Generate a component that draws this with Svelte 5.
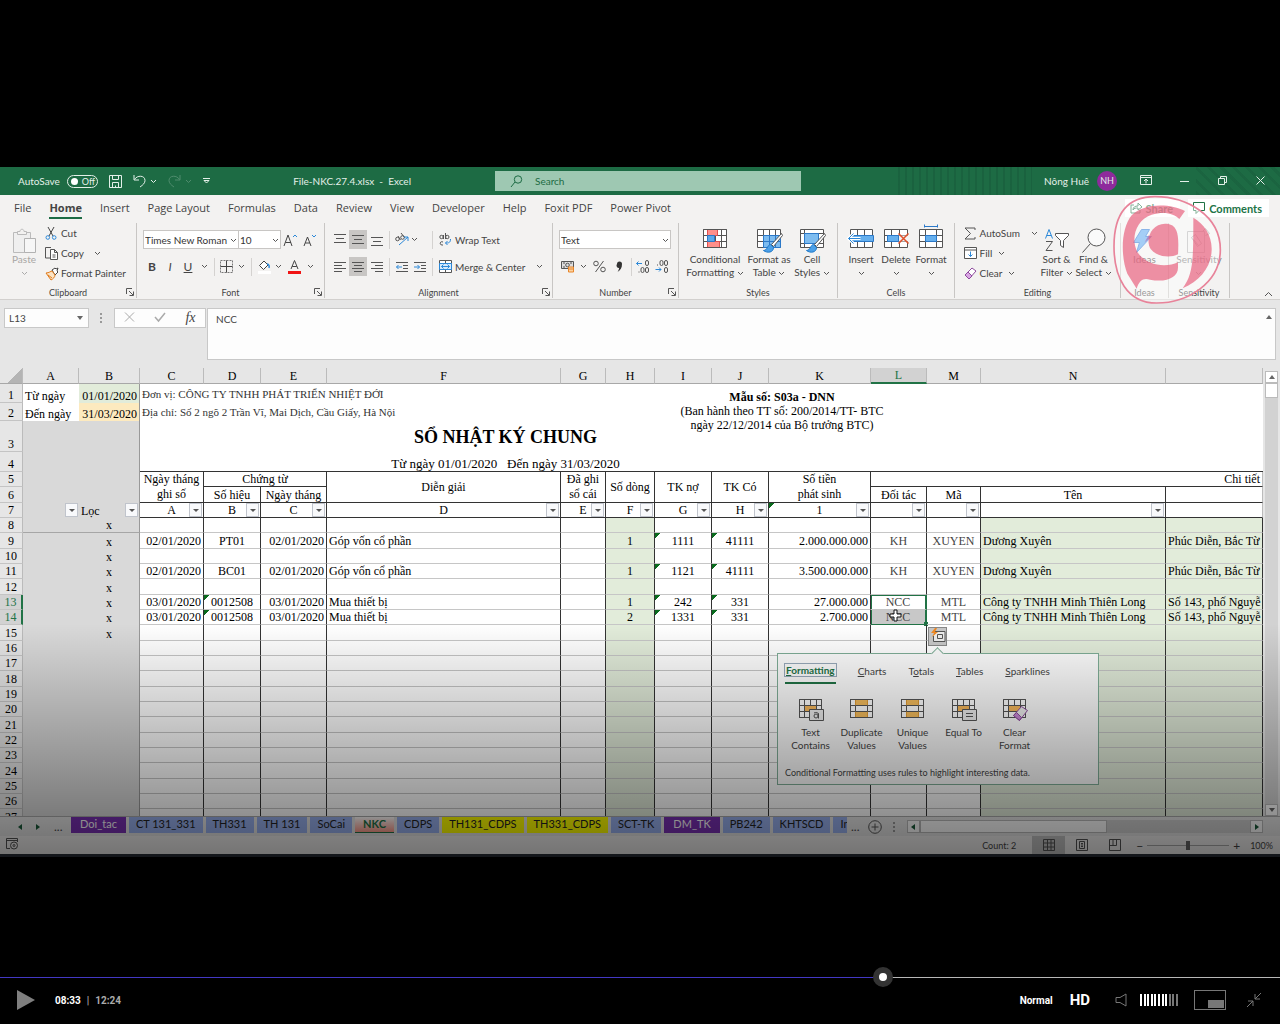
<script>
  const menu = [
    "File", "Home", "Insert", "Page Layout", "Formulas", "Data", "Review",
    "View", "Developer", "Help", "Foxit PDF", "Power Pivot",
  ];

  const sheets = [
    { name: "Doi_tac", color: "purple" },
    { name: "CT 131_331", color: "blue" },
    { name: "TH331", color: "blue" },
    { name: "TH 131", color: "blue" },
    { name: "SoCai", color: "blue" },
    { name: "NKC", color: "active" },
    { name: "CDPS", color: "blue" },
    { name: "TH131_CDPS", color: "yellow" },
    { name: "TH331_CDPS", color: "yellow" },
    { name: "SCT-TK", color: "blue" },
    { name: "DM_TK", color: "purple" },
    { name: "PB242", color: "blue" },
    { name: "KHTSCD", color: "blue" },
    { name: "In", color: "blue" },
  ];

  const columns = "ABCDEFGHIJKLMNO".split("");
  const bodyColumns = columns.slice(2);

  const entries = {
    9: { C: "02/01/2020", D: "PT01", E: "02/01/2020", F: "Góp vốn cổ phần", H: "1", I: "1111", J: "41111", K: "2.000.000.000", L: "KH", M: "XUYEN", N: "Dương Xuyên", O: "Phúc Diễn, Bắc Từ" },
    11: { C: "02/01/2020", D: "BC01", E: "02/01/2020", F: "Góp vốn cổ phần", H: "1", I: "1121", J: "41111", K: "3.500.000.000", L: "KH", M: "XUYEN", N: "Dương Xuyên", O: "Phúc Diễn, Bắc Từ" },
    13: { C: "03/01/2020", D: "0012508", E: "03/01/2020", F: "Mua thiết bị", H: "1", I: "242", J: "331", K: "27.000.000", L: "NCC", M: "MTL", N: "Công ty TNHH Minh Thiên Long", O: "Số 143, phố Nguyễ" },
    14: { C: "03/01/2020", D: "0012508", E: "03/01/2020", F: "Mua thiết bị", H: "2", I: "1331", J: "331", K: "2.700.000", L: "NCC", M: "MTL", N: "Công ty TNHH Minh Thiên Long", O: "Số 143, phố Nguyễ" },
  };

  const rows = Array.from({ length: 20 }, (_, i) => i + 8);

  const filterRow = { C: "A", D: "B", E: "C", F: "D", G: "E", H: "F", I: "G", J: "H", K: "1", L: "", M: "", N: "" };

  const analysisTabs = [
    ["", "F", "ormatting"],
    ["", "C", "harts"],
    ["T", "o", "tals"],
    ["", "T", "ables"],
    ["", "S", "parklines"],
  ];

  const analysisItems = [
    { icon: "textContains", lines: ["Text", "Contains"] },
    { icon: "duplicate", lines: ["Duplicate", "Values"] },
    { icon: "duplicate", lines: ["Unique", "Values"] },
    { icon: "equalTo", lines: ["Equal To"] },
    { icon: "clearFormat", lines: ["Clear", "Format"] },
  ];

  let formula = $state("NCC");
  let cellRef = $state("L13");
  let zoom = $state(100);
  let time = $state(513);
  const total = 744;
  let played = $derived(time / total);

  // triangle marker for numbers stored as text
  function flagged(row, col) {
    if (!entries[row]) return false;
    return col === "I" || col === "J" || (col === "D" && row > 12);
  }

  const table = '<path d="M1 1h23v18H1zM1 7h23M1 13h23M7 1v18M13 1v18M19 1v18" fill="#fff" stroke="#555"/>';
  const orangeTable = '<path d="M1 1h22v18H1z" fill="#fff"/><path d="M6 1h12v6H6z" fill="#fff"/>';
  const brush = '<path d="M25 5 15 16l2 2 9-11z" fill="#fff" stroke="#555"/><path d="M14 16c-3 0-3 6-7 6 4 3 10 2 10-3z" fill="#4ba0e8" stroke="#1f78c8"/>';

  const icons = {
    save: '<path d="M.5.5h12v12H.5zM3.500.5v4h6v-4M3.500 12.500v-5h6v5M6.500 12.500v-2"/>',
    undo: '<path d="M1 1v5h5M1.500 5.500C4 1 12 1 12 6.500 12 9 10 11 7 13"/>',
    redo: '<path d="M12 1v5H7M11.500 5.500C9 1 1 1 1 6.500 1 9 3 11 6 13"/>',
    search: '<circle cx="8" cy="4.500" r="3.700"/><path d="M5 7 1 12"/>',
    ribbonOpts: '<path d="M.5.5h11v9H.5zM.5 2.500h11M6 8.500V4.500M4 6l2-2 2 2"/>',
    minimize: '<path d="M0 5.500h9"/>',
    restore: '<path d="M.5 2.500h6v6h-6zM2.500 2.500v-2h6v6h-2"/>',
    close: '<path d="m.5.5 8 8m0-8-8 8"/>',
    paste: '<path d="M1 4h17v20H1z" fill="#efefef" stroke="#bbb"/><path d="M5 6V3h2.500c0-3 4-3 4 0H14v3z" fill="#f3f2f1" stroke="#bbb"/><path d="M12 10h11v14H12z" fill="#f6f6f6" stroke="#b2b2b2"/>',
    cut: '<path d="m3 0 5 9M9 0 4 9" stroke="#444"/><circle cx="2.800" cy="10.500" r="1.800" stroke="#2b88d8"/><circle cx="9.200" cy="10.500" r="1.800" stroke="#2b88d8"/>',
    copy: '<path d="M5 11H.5V.5H6" stroke="#555"/><path d="M5.500 2.500h4l3 3v7h-7zM9.500 2.500v3h3M7.500 8h3M7.500 10h3" fill="#fff" stroke="#555"/>',
    painter: '<path d="m7 3 3-2 1 1 2-1-1 3 1 1-3 3z" fill="#fff" stroke="#444"/><path d="M1 6c3 0 5-2 6-2l3 4c0 2-2 4-4 5z" fill="#fbe3c4" stroke="#e07a1a"/><path d="m3 8 4 3" stroke="#e07a1a"/>',
    growFont: '<path d="m1 13 4-11 4 11M2.500 9.500h5.500" stroke="#444"/><path d="m10 4 2-2 2 2" stroke="#2b88d8"/>',
    shrinkFont: '<path d="m1 13 3.500-9L8 13M2.300 10h4.500" stroke="#444"/><path d="m9 2 2 2 2-2" stroke="#2b88d8"/>',
    borders: '<path d="M.5.5h12v12H.5z" stroke="#777" stroke-dasharray="2 1"/><path d="M6.500.5v12M.5 6.500h12" stroke="#444"/>',
    fillColor: '<path d="M6 1 1.500 5.500 5.500 9.500 10 5z" fill="#fff" stroke="#444"/><path d="M9 4c2 0 2.500 2 2 4" stroke="#2b88d8" stroke-width="1.500"/><path d="M0 11h13v3H0z" fill="#fff" stroke="none"/>',
    fontColor: '<path d="m3 9 3.500-8.500L10 9M4.200 6.500h4.600" stroke="#444"/><path d="M0 11h13v3H0z" fill="#f01414" stroke="none"/>',
    alignTop: '<path d="M0 1.500h12M2 5.500h8M0 9.500h12"/>',
    alignMid: '<path d="M0 1.500h12M2 5.500h8M0 9.500h12"/>',
    alignBot: '<path d="M0 3.500h12M2 7.500h8M0 11.500h12"/>',
    left: '<path d="M0 1.500h12M0 4.500h8M0 7.500h12M0 10.500h8"/>',
    center: '<path d="M0 1.500h12M2 4.500h8M0 7.500h12M2 10.500h8"/>',
    right: '<path d="M0 1.500h12M4 4.500h8M0 7.500h12M4 10.500h8"/>',
    orient: '<circle cx="2.500" cy="6" r="1.800"/><path d="m3 3 2.500 4M6 0l4 5"/><circle cx="7.500" cy="4.500" r="1.800"/><path d="m4 12 9-8m-4 0h4v4" stroke="#2b88d8"/>',
    outdent: '<path d="M0 1.500h12M7 4.500h5M7 7.500h5M0 10.500h12"/><path d="M6 6H.5m2-2-2 2 2 2" stroke="#2b88d8"/>',
    indent: '<path d="M0 1.500h12M7 4.500h5M7 7.500h5M0 10.500h12"/><path d="M0 6h5.500m-2-2 2 2-2 2" stroke="#2b88d8"/>',
    wrap: '<circle cx="2.500" cy="4" r="1.700"/><path d="M4.500 2v4M6.500 0v6M4 9c-3-1.500-4 3-1 3h1"/><circle cx="8.300" cy="4" r="1.700"/><path d="M11.500 6c0 4-2 4-5 4m2-2-2 2 2 2" stroke="#2b88d8"/>',
    merge: '<path d="M.5.5h12v12H.5zM6.500.5v3M6.500 9.500v3" fill="#fff" stroke="#555"/><path d="M.5 3.500h12v6H.5z" fill="#d5e9fb" stroke="#2b88d8"/><path d="M2.500 6.500h8m-6-2-2 2 2 2m4-4 2 2-2 2" stroke="#2b88d8"/>',
    currency: '<path d="M.5 1.500h12v7H.5z" fill="#ddd"/><path d="M2 3h2M9 3h2M2 7h2"/><circle cx="6.500" cy="5" r="1.800"/><path d="M7.500 7h5v5h-5z" fill="#fbd1a0" stroke="#e8862a"/><path d="M7.500 9h5" stroke="#e8862a"/>',
    percent: '<circle cx="3" cy="3.500" r="2.300"/><circle cx="10" cy="9.500" r="2.300"/><path d="M10.500 1 2.500 12"/>',
    comma: '<path d="M2 3a2.500 2.500 0 0 1 5 0c0 4-1.500 6-4.500 8 1-1.500 1.600-3 1.600-4A2.500 2.500 0 0 1 2 3z" fill="#333" stroke="none"/>',
    decInc: '<path d="M6 3.500H.5m2-2-2 2 2 2" stroke="#2b88d8"/><rect x="9.500" y=".5" width="3" height="5" rx="1.500"/><rect x="5" y="7.500" width="3" height="5" rx="1.500"/><rect x="9.500" y="7.500" width="3" height="5" rx="1.500"/><path d="M2.500 12h1"/>',
    decDec: '<path d="M.5 9.500H6m-2-2 2 2-2 2" stroke="#2b88d8"/><rect x="5" y=".5" width="3" height="5" rx="1.500"/><rect x="9.500" y=".5" width="3" height="5" rx="1.500"/><rect x="9.500" y="7.500" width="3" height="5" rx="1.500"/><path d="M2 5h1"/>',
    conditional: table + '<path d="M5 1h10v6H5zM5 13h12v6H5z" fill="#ff8f8a" stroke="#e05050"/><path d="M5 7h7v6H5z" fill="#5aa9ea" stroke="#2b78c8"/><path d="M1 1h23v18H1z"/>',
    formatTable: table + '<path d="M7 7h17v12H7z" fill="#7dbcf0" stroke="#2b78c8"/><path d="M7 13h17M13 7v12M19 7v12" stroke="#2b78c8"/>' + brush,
    cellStyles: '<path d="M1 1h23v18H1zM5 1v18M1 5h23M1 15h23" fill="#fff"/><path d="M5 5h14v10H5z" fill="#7dbcf0" stroke="#2b78c8"/>' + brush,
    insertCells: '<path d="M2 1h22v18H2zM9 1v18M16 1v18M2 7h22M2 13h22" fill="#fff"/><path d="M4 7h21v6H4z" fill="#66b0ee" stroke="#2b78c8"/><path d="M12 10H0m5-5-5 5 5 5" stroke="#fff" stroke-width="3"/><path d="M12 10H0m5-5-5 5 5 5" stroke="#2b88d8"/>',
    deleteCells: '<path d="M1 1h23v18H1zM8 1v18M16 1v18M1 7h23M1 13h23" fill="#fff"/><path d="M15 7h10v6H15z" fill="#f3f2f1" stroke="none"/><path d="M4 7h11v6H4z" fill="#66b0ee" stroke="#2b78c8"/><path d="m15 5 10 10m0-10L15 15" stroke="#e0502a" stroke-width="1.500"/>',
    formatCells: '<path d="M1 1h23v18H1zM7 1v18M18 1v18M1 7h23M1 13h23" fill="#fff"/><path d="M7 7h11v6H7z" fill="#66b0ee" stroke="#2b78c8"/><path d="M6-2h13M6-4v3M19-4v3" stroke="#2b78c8"/>',
    sum: '<path d="M11 3V1H1l5.500 5.500L1 12h10v-2"/>',
    fillDown: '<path d="M.5.500h12v11H.5zM.5 3h12" fill="#fff"/><path d="M6.500 4.500v5m-2-2 2 2 2-2" stroke="#2b88d8"/>',
    eraser: '<path d="m1 8 7-7 4 3-7 8z" fill="#fff" stroke="#8e4a9e"/><path d="m1 8 3-3 4 4-3 3z" fill="#d9a6e4" stroke="#8e4a9e"/>',
    sort: '<path d="m1 10 3.500-9L8 10M2.300 7h4.400" stroke="#2b88d8"/><path d="M1.500 13H8l-6.500 9H8"/><path d="M11 5h13v2l-5 5v7l-3-2v-5l-5-5z" fill="#fff"/>',
    find: '<circle cx="15" cy="9" r="8.500" fill="#fafafa"/><path d="m9 15-8 9"/>',
    ideas: '<path d="M9 1h8l-4 7h6L4 24l3-10H1z" fill="#5aa6ee" stroke="#2b78d8"/><path d="m12 14 7-6-3-1z" fill="#6a2a9a" stroke="none"/>',
    sensitivity: '<path d="M1 3h17v21H1z" fill="none" stroke="#999"/><path d="m5 9 4-3 6 9-4 3zM16 3l3-3 4 5-4 2M7 11l5 6" stroke="#888"/>',
    share: '<path d="M4 3H1v8h9V8M3 8c0-3 2-4 5-4V1l4 4-4 3V6C6 6 4 6 3 8z" stroke="#217346"/>',
    comment: '<path d="M.5.5h11v8H6l-3 3v-3H.5z" stroke="#217346" fill="#fff"/>',
    launcher: '<path d="M.5 6V.5H6M3 3l4 4M7.500 3.500v4h-4"/>',
    textContains: orangeTable + '<path d="M6 7h12v6H6z" fill="#f8b85a"/><path d="M1 1h22v18H1zM1 7h22M1 13h22M6 1v18M18 1v18M12 1v6"/><path d="M11 11h14v11H11z" fill="#eee"/><circle cx="17.500" cy="17.500" r="2"/><path d="M20 15v5M15.500 14.500c2-1 4-.500 4.500 1"/>',
    duplicate: orangeTable + '<path d="M1 1h22v18H1zM1 7h22M1 13h22"/><path d="M6 1h12v6H6zM6 13h12v6H6z" fill="#f6bd5c" stroke="#e09a30"/><path d="M6 7h12v6H6z" fill="#fff"/><path d="M1 1h22v18H1z"/>',
    equalTo: orangeTable + '<path d="M6 7h12v6H6z" fill="#f8b85a"/><path d="M1 1h22v18H1zM1 7h22M1 13h22M6 1v18M18 1v18M12 1v6"/><path d="M11 11h14v11H11z" fill="#eee"/><path d="M14.500 15h7M14.500 18h7"/>',
    clearFormat: orangeTable + '<path d="M6 7h12v6H6z" fill="#f8b85a"/><path d="M1 1h22v18H1zM1 7h22M1 13h22M6 1v18M18 1v18M12 1v6"/><path d="m11 17 8-9 6 4-8 10z" fill="#eee" stroke="#8e4a9e"/><path d="m11 17 3-3 5 5-2 3z" fill="#c98ad6" stroke="#8e4a9e"/>',
    quick: '<path d="M5 3.500h10v10H3.500V8" fill="#eee"/><path d="M7.500 6.500h5v4h-5z"/><path d="M5 0 1 5h3l-2 4 6-5H5l2-4z" fill="#f08a24" stroke="none"/>',
    normalView: '<path d="M.5.5h11v11H.5zM4.500.5v11M8 .5v11M.5 4h11M.5 8h11"/>',
    pageView: '<path d="M.5.5h11v11H.5zM3.500 2.500h5v7h-5zM5 4.500h2M5 6h2M5 7.500h2"/>',
    breakView: '<path d="M.5.5h11v11H.5zM.5 6.500h7v-6M4 .5v6"/>',
    macro: '<path d="M4 10.500H.5V.5h11V4M.5 2.500h11"/><circle cx="8" cy="7.500" r="3.500"/><circle cx="8" cy="7.500" r="1"/>',
  };
</script>

<!-- the large icons are drawn on whole coordinates, so shift them onto the pixel grid -->
{#snippet icon(name, w, h)}
  {@const shift = w > 20 ? -0.5 : 0}
  <svg class="icon" width={w} height={h} viewBox="{shift} {shift} {w} {h}" aria-hidden="true">{@html icons[name]}</svg>
{/snippet}

{#snippet chev()}
  <svg class="icon chev" width="7" height="5" viewBox="0 0 7 5" aria-hidden="true"><path d="m1 1 2.500 2.500L6 1" /></svg>
{/snippet}

{#snippet big(name, lines, drop)}
  <button class="big">
    {@render icon(name, 26, 25)}
    {#each lines as line, i}
      <span>{line}{#if drop && i === 1}&nbsp;{@render chev()}{/if}</span>
    {/each}
    {#if drop && lines.length === 1}<span>{@render chev()}</span>{/if}
  </button>
{/snippet}

{#snippet filter()}
  <button class="filter" aria-label="Filter"></button>
{/snippet}

<main>
  <div class="excel">
    <header class="titlebar">
      <div class="quick-access">
        <span>AutoSave</span>
        <button class="toggle"><i></i>Off</button>
        <button class="save" aria-label="Save">{@render icon("save", 13, 13)}</button>
        <button aria-label="Undo">{@render icon("undo", 14, 14)}{@render chev()}</button>
        <button class="dim" aria-label="Redo">{@render icon("redo", 14, 14)}{@render chev()}</button>
        <button aria-label="Customize"><svg class="icon" width="7" height="6" viewBox="0 0 7 6"><path d="M0 .5h7M1 2.500l2.500 2.500L6 2.500z" /></svg></button>
        <span class="doc">File-NKC.27.4.xlsx&nbsp; -&nbsp; Excel</span>
      </div>
      <label class="search">
        {@render icon("search", 13, 13)}
        <input type="text" placeholder="Search" />
      </label>
      <div class="window-tools">
        <span>Nông Huê</span>
        <span class="avatar">NH</span>
        <button aria-label="Ribbon options">{@render icon("ribbonOpts", 12, 10)}</button>
        <button aria-label="Minimize">{@render icon("minimize", 9, 9)}</button>
        <button aria-label="Restore">{@render icon("restore", 9, 9)}</button>
        <button aria-label="Close">{@render icon("close", 9, 9)}</button>
      </div>
    </header>

    <nav class="menu">
      {#each menu as item}
        <button class:current={item === "Home"}>{item}</button>
      {/each}
      <div class="menu-end">
        <button class="boxed">{@render icon("share", 12, 12)}Share</button>
        <button class="boxed">{@render icon("comment", 12, 12)}Comments</button>
      </div>
    </nav>

    <div class="ribbon">
      <section class="group clipboard">
        <div class="tools">
          <button class="big off">{@render icon("paste", 24, 25)}<span>Paste</span><span>{@render chev()}</span></button>
          <div class="stack">
            <button>{@render icon("cut", 13, 13)}Cut</button>
            <button>{@render icon("copy", 13, 13)}Copy&nbsp;&nbsp;&nbsp;{@render chev()}</button>
            <button>{@render icon("painter", 13, 13)}Format Painter</button>
          </div>
        </div>
        <footer>Clipboard<button aria-label="Clipboard options">{@render icon("launcher", 8, 8)}</button></footer>
      </section>

      <section class="group font">
        <div class="lines">
          <div class="combos">
            <label><select aria-label="Font"><option>Times New Roman</option></select>{@render chev()}</label>
            <label><select aria-label="Font size"><option>10</option></select>{@render chev()}</label>
            <button aria-label="Grow font">{@render icon("growFont", 15, 14)}</button>
            <button aria-label="Shrink font">{@render icon("shrinkFont", 14, 14)}</button>
          </div>
          <div class="marks">
            <button><b>B</b></button>
            <button><em>I</em></button>
            <button><u>U</u></button>
            <button aria-label="Underline styles">{@render chev()}</button>
            <hr />
            <button aria-label="Borders">{@render icon("borders", 13, 13)}</button>
            <button aria-label="Border styles">{@render chev()}</button>
            <hr />
            <button aria-label="Fill color">{@render icon("fillColor", 13, 14)}</button>
            <button aria-label="Fill colors">{@render chev()}</button>
            <button aria-label="Font color">{@render icon("fontColor", 13, 14)}</button>
            <button aria-label="Font colors">{@render chev()}</button>
          </div>
        </div>
        <footer>Font<button aria-label="Font options">{@render icon("launcher", 8, 8)}</button></footer>
      </section>

      <section class="group alignment">
        <div class="lines">
          <div class="aligns">
            <button aria-label="Top">{@render icon("alignTop", 12, 14)}</button>
            <button class="on" aria-label="Middle">{@render icon("alignMid", 12, 12)}</button>
            <button aria-label="Bottom">{@render icon("alignBot", 12, 12)}</button>
            <hr />
            <button aria-label="Orientation">{@render icon("orient", 14, 13)}</button>
            <button class="near" aria-label="Orientations">{@render chev()}</button>
            <hr />
            <button class="named">{@render icon("wrap", 13, 13)}Wrap Text</button>
          </div>
          <div class="aligns">
            <button aria-label="Left">{@render icon("left", 12, 12)}</button>
            <button class="on" aria-label="Center">{@render icon("center", 12, 12)}</button>
            <button aria-label="Right">{@render icon("right", 12, 12)}</button>
            <hr />
            <button aria-label="Decrease indent">{@render icon("outdent", 12, 12)}</button>
            <button aria-label="Increase indent">{@render icon("indent", 12, 12)}</button>
            <hr />
            <button class="named">{@render icon("merge", 13, 13)}Merge &amp; Center&nbsp;&nbsp;&nbsp;{@render chev()}</button>
          </div>
        </div>
        <footer>Alignment<button aria-label="Alignment options">{@render icon("launcher", 8, 8)}</button></footer>
      </section>

      <section class="group number">
        <div class="lines">
          <div class="combos">
            <label><select aria-label="Number format"><option>Text</option></select>{@render chev()}</label>
          </div>
          <div class="formats">
            <button aria-label="Currency">{@render icon("currency", 14, 13)}</button>
            <button aria-label="Currencies">{@render chev()}</button>
            <button aria-label="Percent">{@render icon("percent", 13, 13)}</button>
            <button aria-label="Comma">{@render icon("comma", 9, 12)}</button>
            <hr />
            <button aria-label="Increase decimal">{@render icon("decInc", 13, 13)}</button>
            <button aria-label="Decrease decimal">{@render icon("decDec", 13, 13)}</button>
          </div>
        </div>
        <footer>Number<button aria-label="Number options">{@render icon("launcher", 8, 8)}</button></footer>
      </section>

      <section class="group styles">
        <div class="tools">
          {@render big("conditional", ["Conditional", "Formatting"], true)}
          {@render big("formatTable", ["Format as", "Table"], true)}
          {@render big("cellStyles", ["Cell", "Styles"], true)}
        </div>
        <footer>Styles</footer>
      </section>

      <section class="group cells">
        <div class="tools">
          {@render big("insertCells", ["Insert"], true)}
          {@render big("deleteCells", ["Delete"], true)}
          {@render big("formatCells", ["Format"], true)}
        </div>
        <footer>Cells</footer>
      </section>

      <section class="group editing">
        <div class="tools">
          <div class="stack">
            <button>{@render icon("sum", 13, 13)}AutoSum&nbsp;&nbsp;&nbsp;{@render chev()}</button>
            <button>{@render icon("fillDown", 13, 12)}Fill&nbsp;{@render chev()}</button>
            <button>{@render icon("eraser", 13, 13)}Clear&nbsp;{@render chev()}</button>
          </div>
          {@render big("sort", ["Sort &", "Filter"], true)}
          {@render big("find", ["Find &", "Select"], true)}
        </div>
        <footer>Editing</footer>
      </section>

      <section class="group ideas">
        <div class="tools">{@render big("ideas", ["Ideas"], false)}</div>
        <footer>Ideas</footer>
      </section>

      <section class="group sensitivity">
        <div class="tools faded">{@render big("sensitivity", ["Sensitivity"], true)}</div>
        <footer>Sensitivity</footer>
      </section>

      <button class="collapse" aria-label="Collapse ribbon"><svg class="icon" width="9" height="6" viewBox="0 0 9 6"><path d="m1 5 3.500-3.500L8 5" /></svg></button>
    </div>

    <!-- logo laid over the ribbon: the ring, the left bowl, its eye and the right crescent -->
    <svg class="watermark" width="110" height="110" viewBox="786 104 330 330" aria-hidden="true">
      <path d="M915 109C1010 109 1111 165 1111 268C1111 370 1010 428 920 428C830 428 792 350 792 258C792 160 830 109 915 109Z" fill="#fff" fill-opacity=".45" stroke="#e8839a" stroke-width="5" />
      <path d="M1005 152C960 128 880 128 845 165C812 205 812 290 832 340L860 385C868 360 880 352 900 358C950 368 984 350 984 322V306C950 322 890 318 862 275C842 235 856 180 905 163C945 152 972 160 988 176Z" fill="#e8627f" fill-opacity=".7" />
      <path d="M945 190C980 190 988 215 984 282C960 294 920 290 902 266C884 236 905 190 945 190Z" fill="#e8627f" fill-opacity=".7" />
      <path d="M1030 172C1062 190 1086 225 1085 268C1084 320 1050 362 998 384C1030 340 1030 300 1030 172Z" fill="#e8627f" fill-opacity=".7" />
    </svg>

    <div class="formula-bar">
      <label class="name-box"><input aria-label="Name box" bind:value={cellRef} /><i class="caret"></i></label>
      <span class="grip"></span>
      <div class="fx">
        <button aria-label="Cancel"><svg class="icon" width="11" height="10" viewBox="0 0 11 10"><path d="m1 .5 9 9m0-9-9 9" stroke="#aaa" /></svg></button>
        <button aria-label="Enter"><svg class="icon" width="12" height="10" viewBox="0 0 12 10"><path d="m1 5 3.500 4L11 1" stroke="#aaa" stroke-width="1.500" /></svg></button>
        <button class="fn">fx</button>
      </div>
      <label class="formula"><textarea aria-label="Formula" bind:value={formula}></textarea><i class="caret up"></i></label>
    </div>

    <div class="sheet">
      <div class="grid-wrap">
        <table>
          <colgroup>
            <col class="w-head" />
            {#each columns as c}<col class="w-{c}" />{/each}
          </colgroup>
          <thead>
            <tr>
              <th class="corner" aria-label="Select all"></th>
              {#each columns as c}<th class:picked={c === "L"}>{c === "O" ? "" : c}</th>{/each}
            </tr>
          </thead>
          <tbody>
            <tr class="r1">
              <th>1</th>
              <td>Từ ngày</td>
              <td class="num from edge">01/01/2020</td>
              <td class="info" colspan="6">Đơn vị: CÔNG TY TNHH PHÁT TRIỂN NHIỆT ĐỚI</td>
              <td class="note-cell" colspan="4">
                <div class="note"><b>Mẫu số: S03a - DNN</b><br />(Ban hành theo TT số: 200/2014/TT- BTC<br />ngày 22/12/2014 của Bộ trưởng BTC)</div>
              </td>
              <td colspan="3"></td>
            </tr>
            <tr class="r2">
              <th>2</th>
              <td>Đến ngày</td>
              <td class="num to edge">31/03/2020</td>
              <td class="info" colspan="6">Địa chỉ: Số 2 ngõ 2 Trần Vĩ, Mai Dịch, Cầu Giấy, Hà Nội</td>
              <td colspan="7"></td>
            </tr>
            <tr class="r3">
              <th>3</th>
              <td class="grey"></td>
              <td class="grey edge"></td>
              <td class="title" colspan="9">SỔ NHẬT KÝ CHUNG</td>
              <td colspan="4"></td>
            </tr>
            <tr class="r4">
              <th>4</th>
              <td class="grey"></td>
              <td class="grey edge"></td>
              <td class="period line" colspan="9">Từ ngày 01/01/2020 &nbsp; Đến ngày 31/03/2020</td>
              <td class="line" colspan="4"></td>
            </tr>
            <tr class="heads">
              <th>5</th>
              <td class="grey"></td>
              <td class="grey edge"></td>
              <td class="box" rowspan="2">Ngày tháng<br />ghi số</td>
              <td class="box" colspan="2">Chứng từ</td>
              <td class="box" rowspan="2">Diễn giải</td>
              <td class="box" rowspan="2">Đã ghi<br />sổ cái</td>
              <td class="box" rowspan="2">Số dòng</td>
              <td class="box" rowspan="2">TK nợ</td>
              <td class="box" rowspan="2">TK Có</td>
              <td class="box" rowspan="2">Số tiền<br />phát sinh</td>
              <td class="box num" colspan="4">Chi tiết</td>
            </tr>
            <tr class="heads tall">
              <th>6</th>
              <td class="grey"></td>
              <td class="grey edge"></td>
              <td class="box">Số hiệu</td>
              <td class="box">Ngày tháng</td>
              <td class="box">Đối tác</td>
              <td class="box">Mã</td>
              <td class="box">Tên</td>
              <td class="box"></td>
            </tr>
            <tr class="heads">
              <th>7</th>
              <td class="grey">{@render filter()}</td>
              <td class="grey edge">Lọc{@render filter()}</td>
              {#each Object.entries(filterRow) as [col, text]}
                <td class="box" class:flag={col === "K"}>{text}{@render filter()}</td>
              {/each}
              <td class="box"></td>
            </tr>
            {#each rows as r}
              <tr class="entry" class:tall={r % 3 === 0}>
                <th class:picked={r === 13 || r === 14}>{r}</th>
                <td class="grey" class:freeze={r === 8}></td>
                <td class="grey edge mid" class:freeze={r === 8}>{r < 16 ? "x" : ""}</td>
                {#each bodyColumns as c}
                  <td class="c{c}" class:flag={flagged(r, c)} class:sel={c === "L" && r === 13} class:sel-end={c === "L" && r === 14}>
                    {entries[r]?.[c] ?? ""}
                    {#if c === "L" && r === 14}
                      <i class="handle"></i>
                      <svg class="pointer" width="13" height="13" viewBox="0 0 13 13"><path d="M5 1h3v4h4v3H8v4H5V8H1V5h4z" fill="#fff" stroke="#111" /></svg>
                    {/if}
                  </td>
                {/each}
              </tr>
            {/each}
          </tbody>
        </table>

        <button class="quick-tag" aria-label="Quick analysis">{@render icon("quick", 16, 15)}</button>
        <div class="analysis">
          <div class="analysis-tabs">
            {#each analysisTabs as [pre, key, rest], i}
              <button class:current={i === 0}><span>{pre}<u>{key}</u>{rest}</span></button>
            {/each}
          </div>
          <div class="analysis-items">
            {#each analysisItems as item}
              {@render big(item.icon, item.lines, false)}
            {/each}
          </div>
          <p>Conditional Formatting uses rules to highlight interesting data.</p>
        </div>
      </div>
      <div class="vscroll">
        <button aria-label="Scroll up"><i class="caret up"></i></button>
        <span class="thumb"></span>
        <button class="last" aria-label="Scroll down"><i class="caret"></i></button>
      </div>
    </div>

    <div class="sheet-bar">
      <div class="sheet-nav">
        <button aria-label="Previous sheet"><i class="arrow back"></i></button>
        <button aria-label="Next sheet"><i class="arrow"></i></button>
        <span>...</span>
      </div>
      <div class="sheet-tabs">
        {#each sheets as s}
          <button class={s.color}>{s.name}</button>
        {/each}
      </div>
      <span class="more">...</span>
      <button class="add" aria-label="New sheet"><svg class="icon" width="14" height="14" viewBox="0 0 14 14"><circle cx="7" cy="7" r="6.300" /><path d="M7 3.500v7M3.500 7h7" /></svg></button>
      <span class="grip"></span>
      <div class="hscroll">
        <button aria-label="Scroll left"><i class="arrow back"></i></button>
        <span class="thumb"></span>
        <button class="last" aria-label="Scroll right"><i class="arrow"></i></button>
      </div>
    </div>

    <div class="status">
      <button aria-label="Record macro">{@render icon("macro", 12, 12)}</button>
      <span class="count">Count: 2</span>
      <button class="view on" aria-label="Normal view">{@render icon("normalView", 12, 12)}</button>
      <button class="view" aria-label="Page layout view">{@render icon("pageView", 12, 12)}</button>
      <button class="view" aria-label="Page break view">{@render icon("breakView", 12, 12)}</button>
      <label class="zoom">−<input type="range" min="10" max="190" aria-label="Zoom" bind:value={zoom} />+</label>
      <span class="percent">{zoom}%</span>
    </div>
    <div class="taskbar"></div>
  </div>

  <div class="shade"></div>

  <div class="player">
    <input class="seek" type="range" min="0" max={total} aria-label="Seek" bind:value={time} style="--played: {played}" />
    <div class="controls">
      <button class="play" aria-label="Play"></button>
      <span class="now">08:33</span>
      <span class="bar">|</span>
      <span class="total">12:24</span>
      <button class="speed">Normal</button>
      <button class="hd">HD</button>
      <button class="mute" aria-label="Mute"><svg width="12" height="14" viewBox="0 0 12 14"><path d="M1 4.500h4l6-3.500v12L5 9.500H1z" /></svg></button>
      <button class="volume" aria-label="Volume">{#each Array(11) as _, i}<i class:low={i > 7}></i>{/each}</button>
      <button class="pip" aria-label="Picture in picture"><i></i></button>
      <button class="shrink" aria-label="Exit full screen"><svg width="16" height="16" viewBox="0 0 16 16"><path d="M15 1 9 7M9 2v5h5M1 15l6-6M2 9h5v5" /></svg></button>
    </div>
  </div>
</main>

<style>
  :global(body) {
    margin: 0;
    background: #000;
  }

  main {
    position: relative;
    display: flex;
    flex-direction: column;
    justify-content: center;
    min-height: 100vh;
    overflow: hidden;
    font-family: Lato, "Open Sans", sans-serif;
    font-size: 10px;
    color: #444;
  }

  button,
  input,
  select,
  textarea {
    margin: 0;
    padding: 0;
    border: 0;
    border-radius: 0;
    background: none;
    font: inherit;
    color: inherit;
    white-space: nowrap;
  }

  hr {
    width: 1px;
    height: 18px;
    margin: 0 auto;
    border: 0;
    background: #d4d2d0;
  }

  .icon {
    fill: none;
    stroke: #555;
    overflow: visible;
    flex: none;
  }

  .excel {
    position: relative;
    background: #e6e6e6;
  }

  /* title bar */
  .titlebar {
    display: grid;
    grid-template-columns: 495px 306px 1fr;
    align-items: center;
    height: 28px;
    color: #e4f0e9;
    background:
      repeating-linear-gradient(90deg, #17593a80 0 2px, transparent 2px 7px) 898px 0 / 134px 28px no-repeat,
      repeating-linear-gradient(45deg, #17593a60 0 3px, transparent 3px 9px) 1196px 0 / 84px 28px no-repeat,
      #1d6b44;
  }

  .titlebar .icon {
    stroke: #e4f0e9;
  }

  .quick-access,
  .window-tools,
  .quick-access button {
    display: flex;
    align-items: center;
  }

  .quick-access {
    gap: 11px;
    padding-left: 18px;
  }

  .quick-access button {
    gap: 3px;
  }

  .quick-access .toggle {
    width: 31px;
    height: 13px;
    margin-left: -4px;
    padding-left: 3px;
    border: 1px solid #e4f0e9;
    border-radius: 7px;
    font-size: 9px;
    box-sizing: border-box;
    gap: 4px;
  }

  .toggle i {
    flex: none;
    width: 7px;
    height: 7px;
    border-radius: 50%;
    background: #fff;
  }

  .dim {
    opacity: 0.25;
  }

  .doc {
    margin-left: auto;
    padding-right: 84px;
  }

  .search {
    display: flex;
    align-items: center;
    gap: 12px;
    height: 20px;
    padding-left: 15px;
    background: #9ec8b2;
    color: #1d6b44;
  }

  .search .icon {
    stroke: #1d6b44;
  }

  .search input {
    width: 200px;
  }

  .search input::placeholder {
    color: #1d6b44;
    opacity: 1;
  }

  .window-tools {
    justify-content: flex-end;
    padding-right: 1px;
  }

  .window-tools button {
    width: 38px;
  }

  .avatar {
    width: 20px;
    margin: 0 10px 0 8px;
    border-radius: 50%;
    background: #8e2a9c;
    font-size: 9px;
    line-height: 20px;
    text-align: center;
  }

  /* menu */
  .menu {
    display: flex;
    align-items: center;
    gap: 18px;
    height: 26px;
    padding-left: 14px;
    background: #f3f2f1;
    font-family: "Open Sans", sans-serif;
    font-size: 11px;
  }

  .menu > button {
    height: 22px;
    border-bottom: 2px solid transparent;
  }

  .menu > button.current {
    border-color: #1d6b44;
    font-weight: bold;
  }

  .menu-end {
    display: flex;
    gap: 8px;
    margin-left: auto;
    padding-right: 11px;
    font-family: Lato, sans-serif;
  }

  .boxed {
    display: flex;
    align-items: center;
    gap: 4px;
    height: 18px;
    padding: 0 7px 0 5px;
    background: #fff;
    color: #217346;
    font-weight: bold;
  }

  /* ribbon */
  .ribbon {
    display: flex;
    height: 78px;
    border-bottom: 1px solid #d2d0ce;
    background: #f3f2f1;
  }

  .group {
    display: flex;
    flex: none;
    flex-direction: column;
    justify-content: space-between;
    box-sizing: border-box;
    margin: 2px 0 1px;
    border-right: 1px solid #c8c6c4;
  }

  .group footer {
    display: flex;
    justify-content: center;
    position: relative;
    font-size: 9px;
    line-height: 10px;
  }

  .group footer button {
    position: absolute;
    right: 2px;
    top: 0;
  }

  .clipboard { width: 137px; }
  .font { width: 188px; }
  .alignment { width: 228px; }
  .number { width: 126px; }
  .styles { width: 159px; }
  .cells { width: 117px; }
  .editing { width: 166px; }
  .ideas { width: 48px; }
  .sensitivity { width: 61px; }

  .tools {
    display: grid;
    justify-content: center;
  }

  .clipboard .tools {
    grid-template-columns: 34px 84px;
    column-gap: 4px;
  }

  .styles .tools {
    grid-template-columns: 62px 46px 40px;
  }

  .cells .tools {
    grid-template-columns: 34px 36px 34px;
  }

  .editing .tools {
    grid-template-columns: 74px 38px 36px;
  }

  .big {
    display: flex;
    flex-direction: column;
    align-items: center;
    padding-top: 5px;
  }

  .big span {
    line-height: 13px;
  }

  .big.off {
    color: #a8a6a4;
  }

  .off .chev {
    stroke: #aaa;
  }

  .faded {
    opacity: 0.7;
  }

  .stack {
    display: grid;
    align-content: start;
  }

  .stack button,
  .named {
    display: flex;
    align-items: center;
    gap: 3px;
    height: 20px;
    text-align: left;
  }

  .lines {
    display: grid;
    gap: 8px;
    padding: 7px 6px 0;
  }

  .combos {
    display: flex;
    align-items: center;
    height: 19px;
  }

  .combos label {
    position: relative;
    box-sizing: border-box;
    width: 96px;
    height: 19px;
    border: 1px solid #c8c6c4;
    background: #fff;
  }

  .combos label + label {
    width: 42px;
    border-left: 0;
  }

  .number .combos label {
    width: 112px;
  }

  .combos select {
    width: 100%;
    height: 17px;
    padding-left: 1px;
    appearance: none;
    color: #333;
  }

  .combos .chev {
    position: absolute;
    right: 1px;
    top: 7px;
  }

  .combos button {
    width: 19px;
  }

  .marks,
  .aligns,
  .formats {
    display: grid;
    align-items: center;
    height: 19px;
  }

  .marks {
    grid-template-columns: 18px 18px 18px 14px 6px 18px 12px 8px 18px 10px 22px 10px;
    font-size: 12px;
  }

  .aligns {
    grid-template-columns: 18px 18px 19px 6px 19px 18px 6px 1fr;
  }

  .formats {
    grid-template-columns: 18px 12px 20px 20px 4px 19px 19px;
  }

  .combos button,
  .marks button,
  .aligns button,
  .formats button {
    display: flex;
    align-items: center;
    justify-content: center;
    height: 19px;
  }

  .aligns button.on {
    background: #c8c6c4;
  }

  .aligns button.near {
    justify-content: flex-start;
  }

  .aligns button.named {
    justify-content: flex-start;
    padding-left: 4px;
  }

  .collapse {
    align-self: flex-end;
    margin: 0 7px 0 auto;
  }

  /* semi-transparent logo laid over the ribbon */
  .watermark {
    position: absolute;
    top: 28px;
    right: 58px;
  }

  /* formula bar */
  .formula-bar {
    display: flex;
    align-items: flex-start;
    padding: 8px 4px;
  }

  .formula-bar label,
  .fx {
    display: flex;
    align-items: center;
    position: relative;
    box-sizing: border-box;
    height: 20px;
    border: 1px solid #c8c8c8;
    background: #fdfdfd;
  }

  .name-box {
    width: 85px;
  }

  .name-box input {
    width: 60px;
    padding-left: 4px;
  }

  .name-box .caret {
    margin-left: auto;
    margin-right: 5px;
  }

  .grip {
    width: 1px;
    height: 10px;
    margin: 5px 11px 0;
    border-left: 2px dotted #999;
  }

  .fx {
    justify-content: space-around;
    width: 92px;
    margin-right: 1px;
  }

  .fn {
    font-family: "Liberation Serif", serif;
    font-size: 14px;
    font-style: italic;
  }

  .formula-bar .formula {
    flex: 1;
    height: 52px;
    align-items: flex-start;
  }

  .formula textarea {
    flex: 1;
    height: 42px;
    padding: 3px 8px;
    line-height: 14px;
    resize: none;
    outline: none;
  }

  .formula .caret {
    margin: 6px 3px;
  }

  .caret {
    border: 3px solid transparent;
    border-top: 4px solid #666;
    border-bottom: 0;
  }

  .caret.up {
    border-top: 0;
    border-bottom: 4px solid #666;
  }

  .arrow {
    border: 3px solid transparent;
    border-left: 4px solid #1a5c3a;
    border-right: 0;
  }

  .arrow.back {
    border-left: 0;
    border-right: 4px solid #1a5c3a;
  }

  /* sheet */
  .sheet {
    display: flex;
  }

  .grid-wrap {
    position: relative;
    flex: 1;
    height: 448px;
    overflow: hidden;
  }

  table {
    width: 100%;
    table-layout: fixed;
    border-collapse: separate;
    border-spacing: 0;
    background: #fff;
    color: #000;
    font-family: "Liberation Serif", serif;
    font-size: 12px;
    line-height: 14px;
  }

  .w-head { width: 23px; }
  .w-A { width: 56px; }
  .w-B { width: 61px; }
  .w-C { width: 64px; }
  .w-D { width: 57px; }
  .w-E { width: 66px; }
  .w-F { width: 234px; }
  .w-G { width: 45px; }
  .w-H { width: 49px; }
  .w-I { width: 57px; }
  .w-J { width: 57px; }
  .w-K { width: 102px; }
  .w-L { width: 56px; }
  .w-M { width: 54px; }
  .w-N { width: 185px; }

  th,
  td {
    position: relative;
    box-sizing: border-box;
    height: 15px;
    padding: 0 2px;
    overflow: hidden;
    white-space: nowrap;
    vertical-align: bottom;
  }

  .tall th,
  .tall td {
    height: 16px;
  }

  th {
    padding: 0;
    border-right: 1px solid #bbb;
    border-bottom: 1px solid #c4c4c4;
    background: #e6e6e6;
    font-weight: normal;
  }

  thead th {
    height: 16px;
    border-bottom-color: #a8a8a8;
  }

  .corner {
    background: linear-gradient(135deg, #e6e6e6 62%, #b4b4b4 62%);
  }

  th.picked {
    background: #d2d2d2;
    color: #217346;
  }

  thead th.picked {
    border-bottom: 2px solid #217346;
    line-height: 13px;
  }

  tbody th.picked {
    border-right: 2px solid #217346;
  }

  .r1 > * { height: 19px; }
  .r2 > * { height: 18px; }
  .r3 > * { height: 31px; }
  .r4 > * { height: 20px; }

  .num {
    text-align: right;
  }

  .mid {
    text-align: center;
  }

  .from { background: #e2ecda; }
  .to { background: #fdeabf; }
  .grey { background: #d9d9d9; }

  .edge {
    border-right: 1px solid #999;
  }

  .freeze {
    border-bottom: 1px solid #a6a6a6;
  }

  .info {
    font-size: 11px;
    vertical-align: middle;
    color: #333;
  }

  .note-cell {
    overflow: visible;
  }

  .note {
    position: absolute;
    top: 6px;
    left: 0;
    right: 18px;
    text-align: center;
  }

  .title {
    font-size: 18px;
    font-weight: bold;
    line-height: 22px;
    text-align: center;
    vertical-align: middle;
  }

  .period {
    font-size: 13px;
    text-align: center;
  }

  .line {
    border-bottom: 1px solid #333;
  }

  .box {
    border-right: 1px solid #333;
    border-bottom: 1px solid #333;
    text-align: center;
  }

  .box[rowspan] {
    vertical-align: middle;
    line-height: 15px;
  }

  .box.num {
    text-align: right;
  }

  .heads td:last-child,
  .entry td:last-child {
    border-right-color: #bbb;
  }

  .filter {
    position: absolute;
    right: 1px;
    top: 0;
    width: 13px;
    height: 14px;
    border: 1px solid #c0c4cc;
    background: #f8f9fb;
  }

  .filter::after {
    content: "";
    position: absolute;
    left: 3px;
    top: 5px;
    border: 3px solid transparent;
    border-top-color: #555;
    border-bottom: 0;
  }

  .entry td[class*="c"] {
    border-right: 1px solid #333;
    border-bottom: 1px solid #c6c6c6;
  }

  .cC,
  .cE,
  .cK {
    text-align: right;
  }

  .cD,
  .cH,
  .cI,
  .cJ,
  .cL,
  .cM {
    text-align: center;
  }

  .cL,
  .cM {
    color: #444;
  }

  .cH,
  .cN,
  .cO {
    background-color: #e2ecda;
  }

  .cO {
    padding-right: 0;
  }

  .flag {
    background-image: linear-gradient(135deg, #0a6b1e 4px, transparent 4px);
  }

  .entry td.sel {
    border-right: 2px solid #217346;
    box-shadow: inset 1px 1px #217346;
  }

  .entry td.sel-end {
    overflow: visible;
    border-right: 2px solid #217346;
    border-bottom: 1px solid #217346;
    box-shadow: inset 1px 0 #217346;
    background: #c8c8c8;
  }

  .handle {
    position: absolute;
    right: -3px;
    bottom: -2px;
    width: 4px;
    height: 4px;
    background: #217346;
  }

  .pointer {
    position: absolute;
    left: 18px;
    top: -1px;
  }

  .quick-tag {
    position: absolute;
    left: 928px;
    top: 259px;
    width: 19px;
    height: 19px;
    border: 1px solid #888;
    background: #c8c8c8;
  }

  .analysis {
    position: absolute;
    left: 777px;
    top: 285px;
    width: 322px;
    height: 132px;
    box-sizing: border-box;
    padding: 9px 7px;
    border: 1px solid #7fae97;
    background: #fdfdfd;
  }

  .analysis::before {
    content: "";
    position: absolute;
    left: 155px;
    top: -5px;
    width: 8px;
    height: 8px;
    border: solid #7fae97;
    border-width: 1px 0 0 1px;
    background: #fdfdfd;
    transform: rotate(45deg);
  }

  .analysis-tabs {
    display: flex;
    gap: 22px;
  }

  .analysis-tabs button {
    height: 21px;
    padding-bottom: 6px;
  }

  .analysis-tabs .current {
    border-bottom: 2px solid #217346;
    color: #217346;
    font-weight: bold;
  }

  .current span {
    padding: 0 1px;
    outline: 1px solid #9ab;
  }

  .analysis-items {
    display: grid;
    grid-template-columns: repeat(5, 51px);
    align-items: start;
    margin-top: 9px;
  }

  .analysis-items .big .icon {
    margin-bottom: 3px;
  }

  .analysis p {
    margin: 14px 0 0;
    font-size: 9px;
    line-height: 14px;
  }

  .vscroll {
    display: flex;
    flex-direction: column;
    width: 13px;
    margin: 3px 2px 0;
    background: #d2d2d2;
  }

  .vscroll button,
  .hscroll button {
    display: flex;
    align-items: center;
    justify-content: center;
    box-sizing: border-box;
    width: 13px;
    height: 12px;
    border: 1px solid #bbb;
    background: #fff;
  }

  .vscroll .thumb {
    height: 13px;
    border: 1px solid #bbb;
    background: #fff;
  }

  .vscroll .last {
    margin-top: auto;
  }

  /* sheet tabs */
  .sheet-bar {
    display: flex;
    align-items: center;
    height: 20px;
    border-top: 1px solid #aaa;
    box-sizing: border-box;
  }

  .sheet-nav {
    display: flex;
    align-items: center;
    gap: 14px;
    width: 53px;
    padding-left: 18px;
    font-size: 12px;
  }

  .sheet-nav button,
  .hscroll button {
    display: flex;
  }

  .sheet-tabs {
    display: flex;
    gap: 3px;
    width: 776px;
    overflow: hidden;
    align-self: flex-start;
  }

  .sheet-tabs button {
    flex: none;
    height: 16px;
    padding: 0 7px 2px;
    font-size: 11px;
    line-height: 14px;
    background: #98b0ee;
    color: #222;
  }

  .sheet-tabs .purple {
    padding: 0 9px 2px;
    background: #7a30b4;
    color: #fff;
  }

  .sheet-tabs .yellow {
    background: #ffff00;
  }

  .sheet-tabs .active {
    padding: 0 8px 1px;
    border-bottom: 1px solid #217346;
    background: linear-gradient(#fff, #ff9a8a);
    color: #217346;
    font-weight: bold;
  }

  .more {
    padding: 0 8px 0 4px;
    font-size: 12px;
  }

  .add {
    display: flex;
  }

  .sheet-bar .grip {
    margin-top: 0;
  }

  .hscroll {
    display: flex;
    flex: 1;
    height: 13px;
    margin-right: 17px;
    background: #d0d0d0;
  }

  .hscroll button {
    height: 13px;
  }

  .hscroll .thumb {
    width: 185px;
    border: 1px solid #bbb;
    background: #fff;
  }

  .hscroll .last {
    margin-left: auto;
  }

  .status {
    display: flex;
    align-items: center;
    height: 18px;
    padding: 0 7px 0 6px;
    background: #f3f2f1;
    font-size: 9px;
  }

  .count {
    margin-left: auto;
    padding-right: 16px;
  }

  .view {
    display: flex;
    align-items: center;
    justify-content: center;
    width: 33px;
    height: 18px;
  }

  .view.on {
    background: #c4c4c4;
  }

  .zoom {
    display: flex;
    align-items: center;
    gap: 4px;
    padding: 0 10px 0 5px;
    font-size: 12px;
  }

  .zoom input {
    width: 82px;
    height: 12px;
    appearance: none;
    background: linear-gradient(#aaa, #aaa) center / 100% 1px no-repeat;
  }

  .zoom input::-webkit-slider-thumb {
    appearance: none;
    width: 4px;
    height: 9px;
    background: #666;
  }

  .taskbar {
    height: 3px;
    background: #2a2f38;
  }

  .shade {
    position: absolute;
    right: 0;
    bottom: 0;
    left: 0;
    height: 400px;
    background: linear-gradient(transparent, rgba(0, 0, 0, 0.9));
    pointer-events: none;
  }

  /* player controls over the video */
  .player {
    position: absolute;
    right: 0;
    bottom: 0;
    left: 0;
    overflow: hidden;
    font-family: Roboto, sans-serif;
    font-weight: bold;
    color: #fff;
  }

  .seek {
    display: block;
    width: calc(100% + 20px);
    height: 20px;
    margin: 0 -10px;
    appearance: none;
    background: linear-gradient(
        90deg,
        #4338c4 calc(10px + (100% - 20px) * var(--played)),
        #b8b8b8 0
      )
      center / 100% 1px no-repeat;
  }

  .seek::-webkit-slider-thumb {
    appearance: none;
    width: 20px;
    height: 20px;
    border: 6px solid #333;
    border-radius: 50%;
    background: #fff;
  }

  .controls {
    display: flex;
    align-items: center;
    height: 26px;
    padding: 0 18px 11px 17px;
  }

  .play {
    width: 0;
    border: 10px solid transparent;
    border-left: 18px solid #7f7f7f;
    border-right: 0;
    margin-right: 20px;
  }

  .bar,
  .total {
    color: #aaa;
  }

  .bar {
    padding: 0 6px;
  }

  .speed {
    margin-left: auto;
    margin-right: 17px;
  }

  .hd {
    margin-right: 25px;
    font-size: 15px;
  }

  .controls svg {
    display: block;
    fill: none;
    stroke: #777;
  }

  .mute {
    margin-right: 13px;
  }

  .volume {
    display: flex;
    justify-content: space-between;
    width: 38px;
    margin-right: 16px;
  }

  .volume i {
    width: 2px;
    height: 12px;
    background: #fff;
  }

  .volume .low {
    background: #777;
  }

  .pip {
    display: flex;
    align-items: flex-end;
    justify-content: flex-end;
    box-sizing: border-box;
    width: 32px;
    height: 20px;
    padding: 1px;
    margin-right: 20px;
    border: 1px solid #777;
  }

  .pip i {
    width: 16px;
    height: 8px;
    background: #777;
  }
</style>
